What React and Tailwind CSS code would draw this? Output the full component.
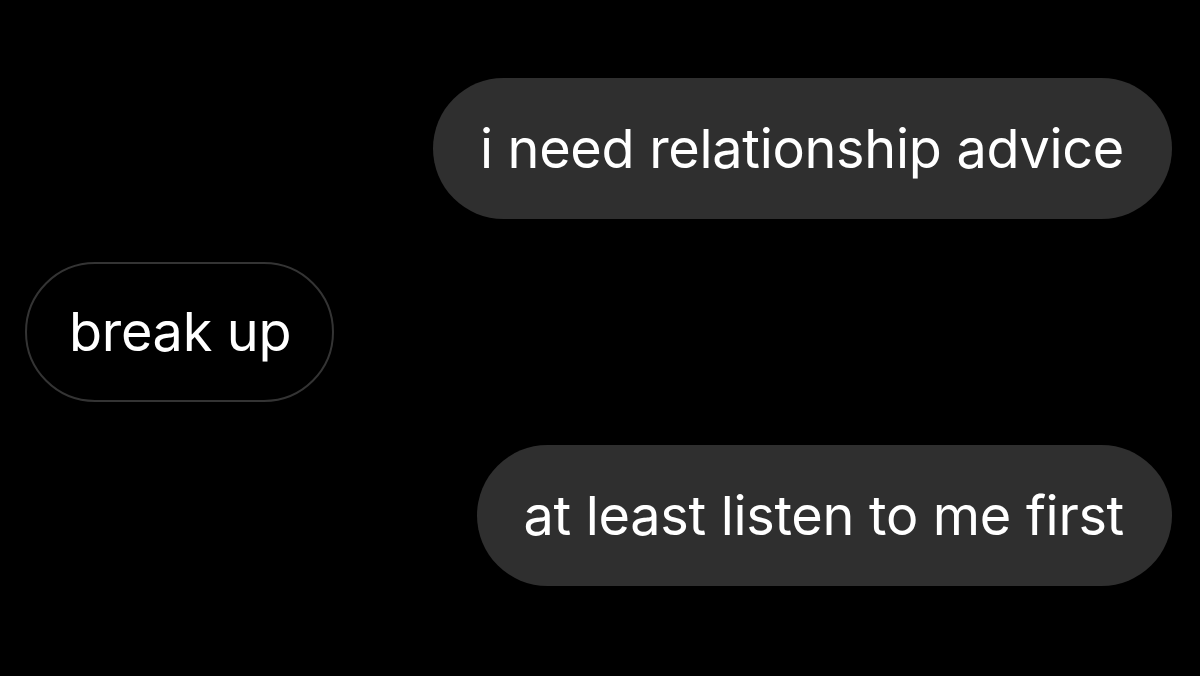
import React from 'react'

const messages = [
  { text: 'i need relationship advice', mine: true },
  { text: 'break up', mine: false },
  { text: 'at least listen to me first', mine: true },
]

const App = () => {
  return (
    <div className="flex h-[676px] w-[1200px] flex-col gap-[43px] overflow-hidden bg-black pl-[25px] pr-[28px] pt-[78px] font-['Inter','Noto_Sans',sans-serif] text-[54px] tracking-[-0.3px] text-white">
      {messages.map((m, i) =>
        m.mine ? (
          <div key={i} className="flex justify-end">
            <div className={`flex h-[141px] items-center rounded-full bg-[#2f2f2f] leading-none ${i === 0 ? 'pl-[47px] pr-[48px]' : 'pl-[47px] pr-[48px]'}`}>
              {m.text}
            </div>
          </div>
        ) : (
          <div key={i} className="flex justify-start">
            <div className="flex h-[140px] items-center rounded-full border-2 border-[#343434] bg-black pl-[42px] pr-[41px] leading-none">
              {m.text}
            </div>
          </div>
        )
      )}
    </div>
  )
}

export default App
